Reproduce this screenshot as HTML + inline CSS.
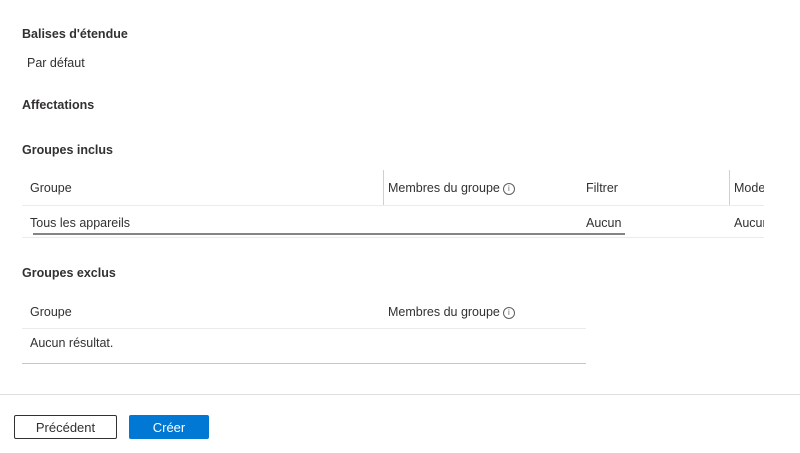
<!DOCTYPE html>
<html><head><style>
body{margin:0;width:800px;height:453px;background:#fff;font-family:"Liberation Sans",sans-serif;font-size:12.5px;color:#323130;position:relative;overflow:hidden}
.a{position:absolute;white-space:nowrap;line-height:16px}
.b{font-weight:bold;font-size:12.5px;color:#323130}
.l{position:absolute;background:#edebe9}
.i{display:inline-block;width:10px;height:10px;border:1px solid #605e5c;border-radius:50%;font-size:8px;line-height:10px;text-align:center;vertical-align:1px;margin-left:3px;color:#605e5c}
</style></head><body>
<div class="a b" style="left:22px;top:26px">Balises d'étendue</div>
<div class="a" style="left:27px;top:55px">Par défaut</div>
<div class="a b" style="left:22px;top:97px">Affectations</div>
<div class="a b" style="left:22px;top:142px">Groupes inclus</div>

<div class="a" style="left:30px;top:180px">Groupe</div>
<div class="l" style="left:383px;top:170px;width:1px;height:35px;background:#d2d0ce"></div>
<div class="a" style="left:388px;top:180px">Membres du groupe<span class="i">i</span></div>
<div class="a" style="left:586px;top:180px">Filtrer</div>
<div class="l" style="left:729px;top:170px;width:1px;height:35px;background:#d2d0ce"></div>
<div class="a" style="left:734px;top:180px;width:30px;overflow:hidden">Mode</div>
<div class="l" style="left:22px;top:205px;width:742px;height:1px"></div>
<div class="a" style="left:30px;top:215px">Tous les appareils</div>
<div class="a" style="left:586px;top:215px">Aucun</div>
<div class="a" style="left:734px;top:215px;width:30px;overflow:hidden">Aucun</div>
<div class="l" style="left:33px;top:233px;width:592px;height:2px;background:#858585"></div>
<div class="l" style="left:22px;top:237px;width:742px;height:1px"></div>

<div class="a b" style="left:22px;top:265px">Groupes exclus</div>
<div class="a" style="left:30px;top:304px">Groupe</div>
<div class="a" style="left:388px;top:304px">Membres du groupe<span class="i">i</span></div>
<div class="l" style="left:22px;top:328px;width:564px;height:1px"></div>
<div class="a" style="left:30px;top:335px">Aucun résultat.</div>
<div class="l" style="left:22px;top:363px;width:564px;height:1px;background:#c8c6c4"></div>

<div class="l" style="left:0;top:394px;width:800px;height:1px;background:#e1dfdd"></div>
<div style="position:absolute;left:14px;top:415px;width:101px;height:22px;border:1px solid #323130;border-radius:2px;text-align:center;line-height:24px;font-size:13px">Précédent</div>
<div style="position:absolute;left:129px;top:415px;width:80px;height:24px;background:#0078d4;border-radius:2px;color:#fff;text-align:center;line-height:25px;font-size:13px">Créer</div>
</body></html>
